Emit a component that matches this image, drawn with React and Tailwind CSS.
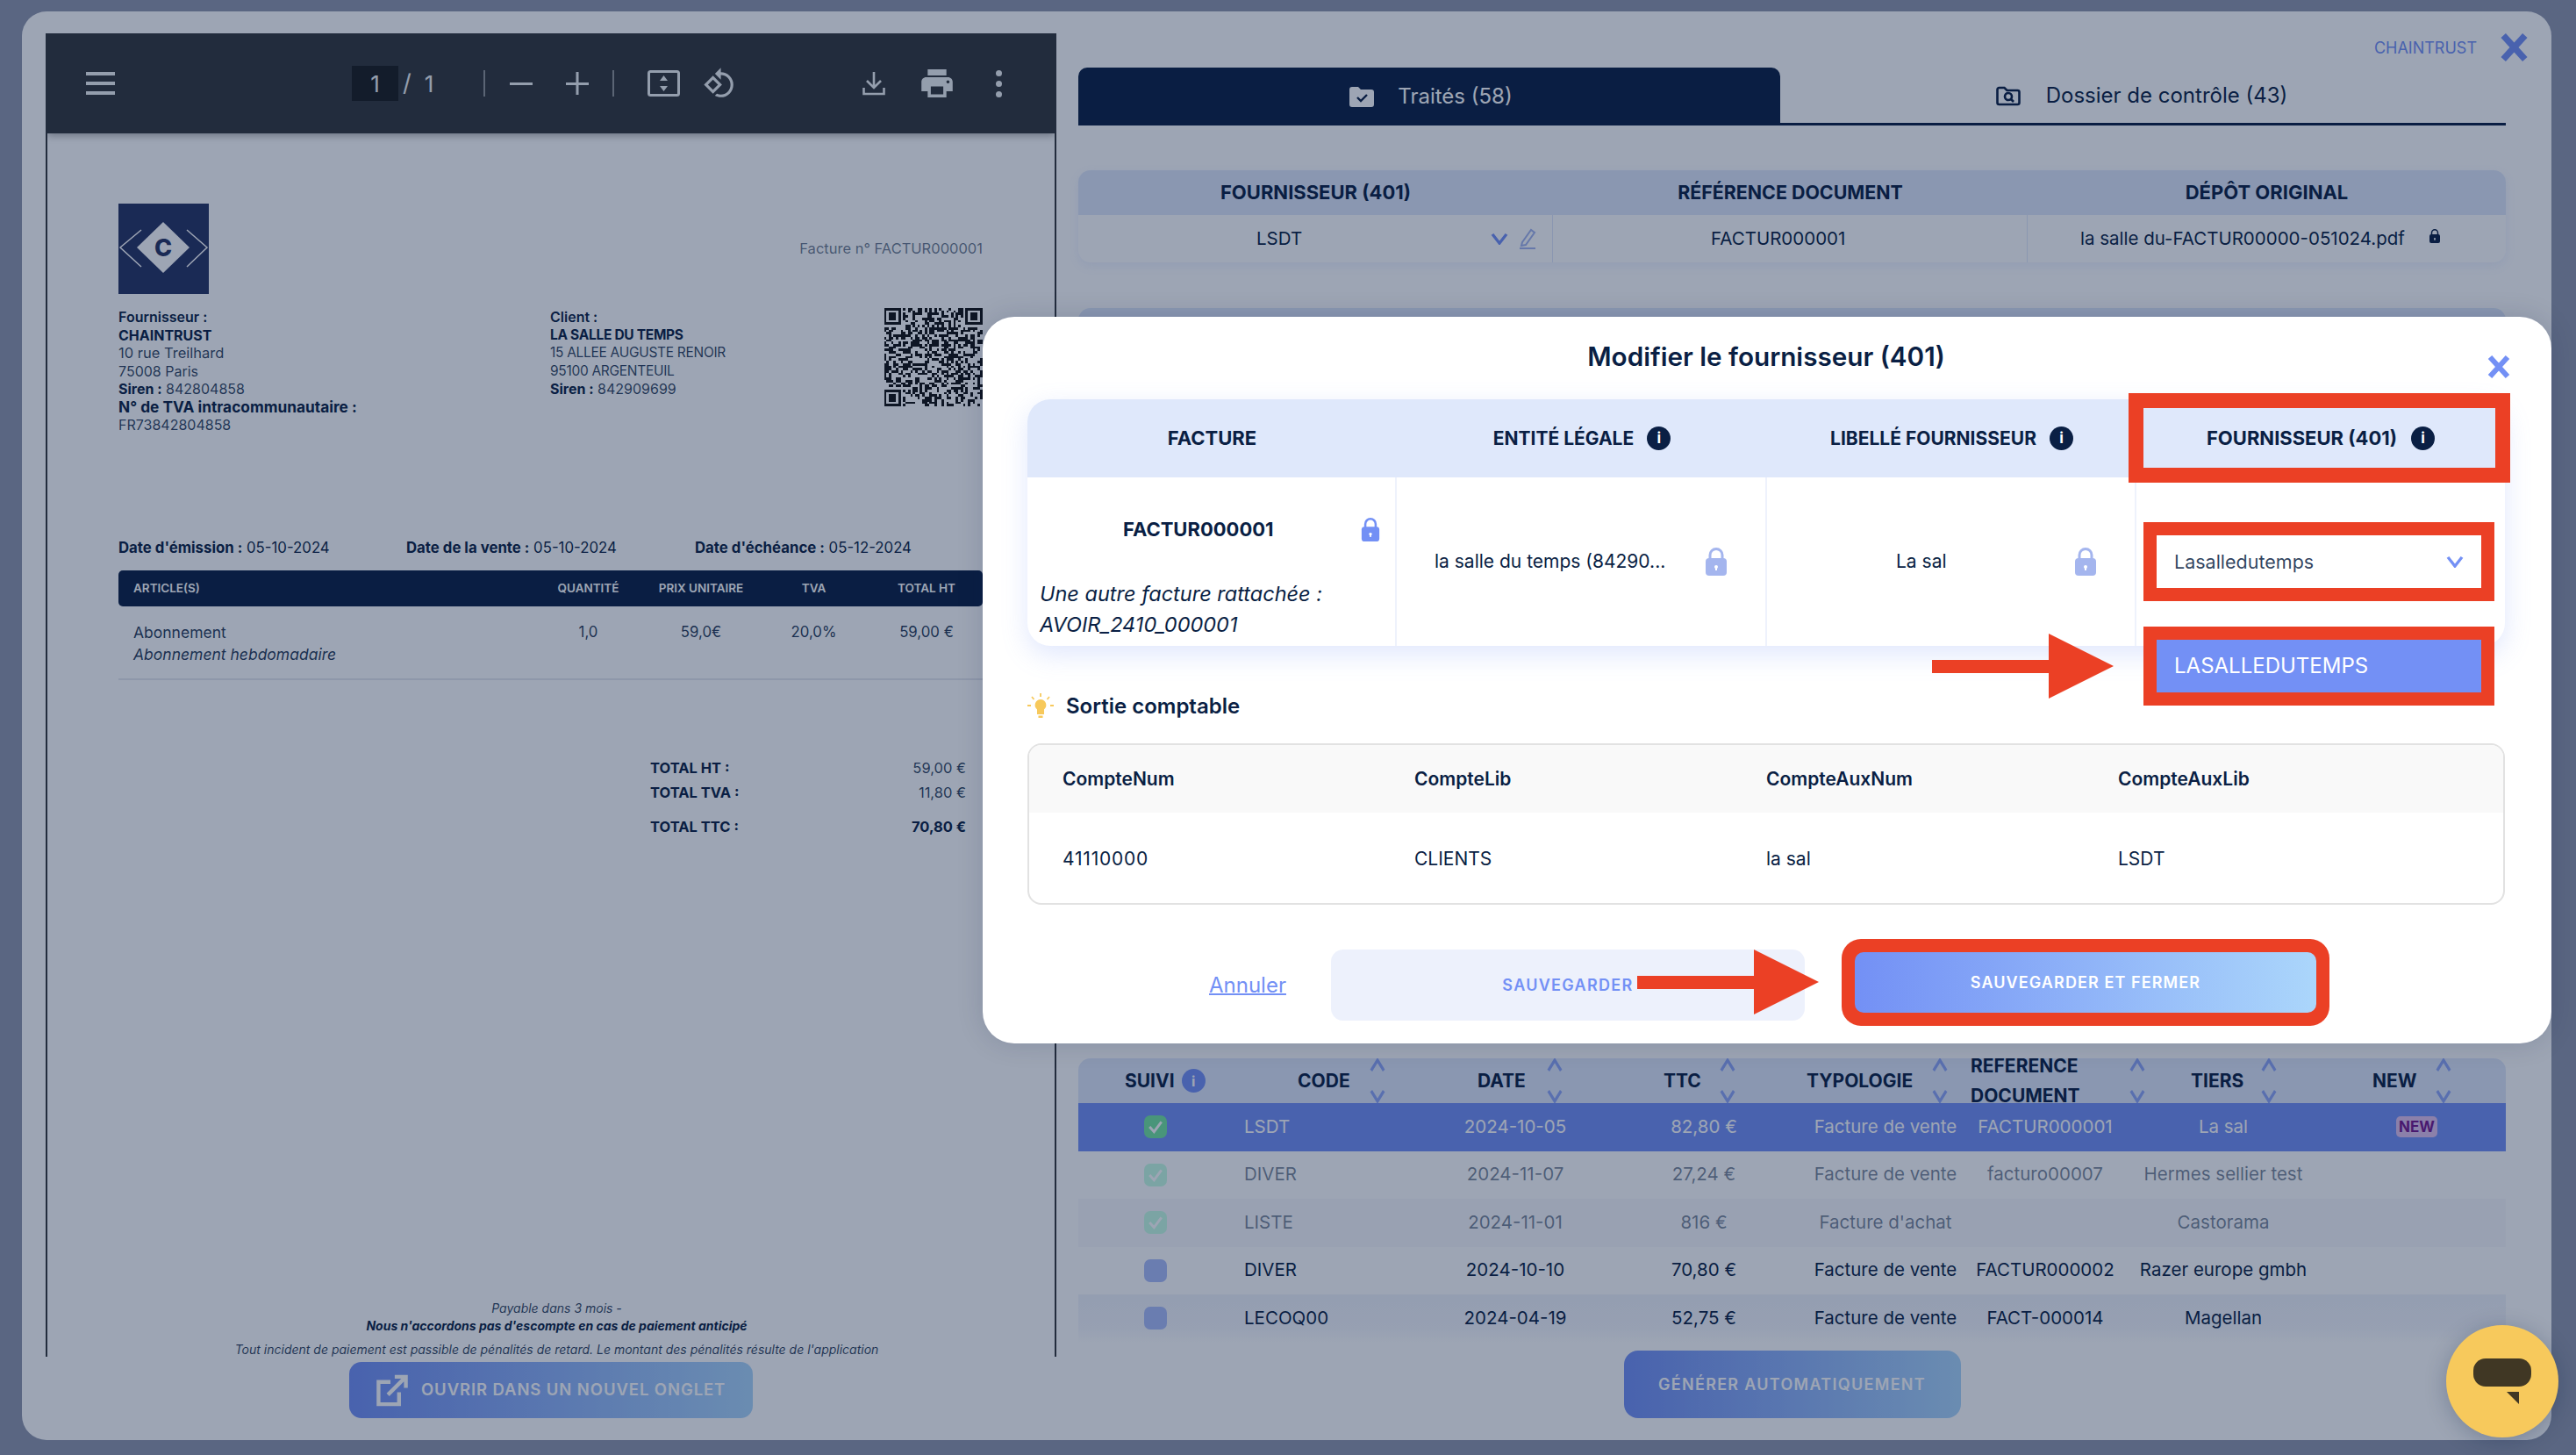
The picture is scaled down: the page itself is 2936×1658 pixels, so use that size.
import React from "react";

const font = { fontFamily: '"Inter","Liberation Sans",sans-serif' };

function Chevron({ up, className = "" }) {
  return (
    <svg viewBox="0 0 20 14" className={className} preserveAspectRatio="none" fill="none" stroke="currentColor" strokeWidth="3.4">
      <path d={up ? "M2 13 L10 2 L18 13" : "M2 1 L10 12 L18 1"} />
    </svg>
  );
}

function Lock({ className = "" }) {
  return (
    <svg viewBox="0 0 24 32" className={className} fill="currentColor">
      <path d="M5 14 V8.5 a7 7 0 0 1 14 0 V14" fill="none" stroke="currentColor" strokeWidth="3" />
      <rect x="0" y="12" width="24" height="20" rx="4" />
      <circle cx="12" cy="22" r="2" fill="#fff" />
      <rect x="11" y="22" width="2" height="4" fill="#fff" />
    </svg>
  );
}

function Info({ className = "" }) {
  return (
    <span className={`flex shrink-0 items-center justify-center rounded-full bg-[#0a1f44] text-[17px] font-bold leading-none text-white ${className}`}>
      i
    </span>
  );
}

function X({ className = "" }) {
  return (
    <svg viewBox="0 0 26 26" className={className} fill="none" stroke="currentColor" strokeWidth="6">
      <path d="M3 2 L23 24 M23 2 L3 24" />
    </svg>
  );
}

function Qr() {
  const n = 41;
  const cells = [];
  let s = 12345;
  const finder = (x, y) => x >= 0 && y >= 0 && x < 7 && y < 7;
  for (let y = 0; y < n; y++) {
    for (let x = 0; x < n; x++) {
      s = (s * 1103515245 + 12345) & 0x7fffffff;
      const inF = (x < 8 && y < 8) || (x >= n - 8 && y < 8) || (x < 8 && y >= n - 8);
      if (inF) {
        const f = x < 8 && y < 8 ? [x, y] : x >= n - 8 && y < 8 ? [x - (n - 7), y] : [x, y - (n - 7)];
        if (finder(f[0], f[1])) {
          const [a, b] = f;
          const ring = a === 0 || a === 6 || b === 0 || b === 6;
          const core = a >= 2 && a <= 4 && b >= 2 && b <= 4;
          if (ring || core) cells.push([x, y]);
        }
      } else if ((s >> 16) & 1) cells.push([x, y]);
    }
  }
  return (
    <svg viewBox="0 0 41 41" className="h-[112px] w-[113px]" shapeRendering="crispEdges">
      {cells.map(([x, y]) => (
        <rect key={`${x}-${y}`} x={x} y={y} width="1" height="1" fill="#111" />
      ))}
    </svg>
  );
}

function Logo() {
  return (
    <svg viewBox="0 0 103 103" className="h-[103px] w-[103px] shrink-0">
      <rect width="103" height="103" fill="#263262" />
      <path d="M51 21 L81 50 L51 79 L21 50 Z" fill="#fff" />
      <path d="M26 30 L2 50 L26 72 M78 30 L101 50 L78 72" fill="none" stroke="#fff" strokeWidth="1.5" />
      <text x="51" y="60" textAnchor="middle" fontSize="27" fontWeight="800" fill="#263262" fontFamily="Inter,sans-serif">C</text>
    </svg>
  );
}

function Toolbar() {
  return (
    <div className="relative z-10 flex h-[114px] shrink-0 items-center bg-[#323639] text-[#f1f3f4] shadow-[0_3px_8px_rgba(0,0,0,0.3)]">
      <div className="ml-[44px] flex w-[33px] flex-col gap-[7px]">
        <span className="h-[4px] bg-[#f1f3f4]" />
        <span className="h-[4px] bg-[#f1f3f4]" />
        <span className="h-[4px] bg-[#f1f3f4]" />
      </div>
      <div className="ml-[270px] flex h-[40px] w-[53px] items-center justify-center bg-[#191b1c] text-[26px]">1</div>
      <span className="ml-[5px] text-[27px]">/</span>
      <span className="ml-[15px] text-[26px]">1</span>
      <span className="ml-[57px] h-[30px] w-[2px] bg-[#f1f3f4]/50" />
      <svg viewBox="0 0 26 26" className="ml-[28px] h-[26px] w-[26px]" fill="currentColor"><rect y="12" width="26" height="3" /></svg>
      <svg viewBox="0 0 26 26" className="ml-[38px] h-[26px] w-[26px]" fill="currentColor"><rect y="12" width="26" height="3" /><rect x="11.5" width="3" height="26" /></svg>
      <span className="ml-[27px] h-[30px] w-[2px] bg-[#f1f3f4]/50" />
      <svg viewBox="0 0 37 30" className="ml-[38px] h-[30px] w-[37px]" fill="none" stroke="currentColor" strokeWidth="3">
        <rect x="1.5" y="1.5" width="34" height="27" rx="2" />
        <path d="M18.5 6 L23 12 H14 Z M18.5 24 L14 18 H23 Z" fill="currentColor" stroke="none" />
      </svg>
      <svg viewBox="0 0 24 24" className="ml-[26px] h-[38px] w-[38px]" fill="currentColor">
        <path d="M7.34 6.41L.86 12.9l6.49 6.48 6.49-6.48-6.5-6.49zM3.69 12.9l3.66-3.66L11 12.9l-3.66 3.66-3.65-3.66zm15.67-6.26C17.61 4.88 15.3 4 13 4V.76L8.76 5 13 9.24V6c1.79 0 3.58.68 4.95 2.05 2.73 2.73 2.73 7.17 0 9.9C16.58 19.32 14.79 20 13 20c-.97 0-1.94-.21-2.84-.61l-1.49 1.49C10.02 21.62 11.51 22 13 22c2.3 0 4.61-.88 6.36-2.64 3.52-3.51 3.52-9.21 0-12.72z" />
      </svg>
      <svg viewBox="0 0 26 28" className="ml-[144px] h-[28px] w-[26px]" fill="none" stroke="currentColor" strokeWidth="2.6">
        <path d="M13 1 V18 M5 11 L13 19 L21 11 M1.5 19 V26 H24.5 V19" />
      </svg>
      <svg viewBox="2 3 20 18" className="ml-[41px] h-[32px] w-[36px]" fill="currentColor">
        <path d="M19 8H5c-1.66 0-3 1.34-3 3v6h4v4h12v-4h4v-6c0-1.66-1.34-3-3-3zm-3 11H8v-5h8v5zm3-7c-.55 0-1-.45-1-1s.45-1 1-1 1 .45 1 1-.45 1-1 1zm-1-9H6v4h12V3z" />
      </svg>
      <div className="ml-[49px] flex flex-col gap-[5px]">
        <span className="h-[7px] w-[7px] rounded-full bg-[#f1f3f4]" />
        <span className="h-[7px] w-[7px] rounded-full bg-[#f1f3f4]" />
        <span className="h-[7px] w-[7px] rounded-full bg-[#f1f3f4]" />
      </div>
    </div>
  );
}

function Invoice() {
  const line = "h-[20.5px] leading-[20.5px]";
  const caps = "h-[20.5px] text-[15.5px] leading-[20.5px] tracking-[-0.3px]";
  return (
    <div className="flex-1 bg-white pl-[81px] pr-[82px] text-[16.8px] text-[#0a1f44]">
      <div className="mt-[80px] flex items-center justify-between">
        <Logo />
        <span className="text-[16.5px] text-[#0a1f44]/60">Facture n° FACTUR000001</span>
      </div>
      <div className="mt-[16px] grid h-[144px] grid-cols-[492px_380px_113px] text-[16px]">
        <div>
          <div className={`${line} font-semibold`}>Fournisseur :</div>
          <div className={`${line} font-bold`}>CHAINTRUST</div>
          <div className={`${line} text-[16.5px] text-[#0a1f44]/85`}>10 rue Treilhard</div>
          <div className={`${line} text-[#0a1f44]/85`}>75008 Paris</div>
          <div className={`${line} text-[#0a1f44]/85`}><b className="font-bold text-[#0a1f44]">Siren :</b> 842804858</div>
          <div className={`${line} text-[17.3px] font-bold`}>N° de TVA intracommunautaire :</div>
          <div className={`${line} text-[#0a1f44]/85`}>FR73842804858</div>
        </div>
        <div>
          <div className={`${line} font-semibold`}>Client :</div>
          <div className={`${caps} font-bold`}>LA SALLE DU TEMPS</div>
          <div className={`${caps} text-[#0a1f44]/85`}>15 ALLEE AUGUSTE RENOIR</div>
          <div className={`${caps} text-[#0a1f44]/85`}>95100 ARGENTEUIL</div>
          <div className={`${line} text-[#0a1f44]/85`}><b className="font-bold text-[#0a1f44]">Siren :</b> 842909699</div>
        </div>
        <Qr />
      </div>
      <div className="mt-[119px] grid h-[20px] grid-cols-[328px_329px_1fr] items-center leading-[20px]">
        <span><b className="font-bold">Date d'émission :</b> 05-10-2024</span>
        <span><b className="font-bold">Date de la vente :</b> 05-10-2024</span>
        <span><b className="font-bold">Date d'échéance :</b> 05-12-2024</span>
      </div>
      <div className="mt-[16px] grid h-[41px] grid-cols-[471px_129px_128px_129px_128px] items-center rounded-[5px] bg-[#0a1f44] text-center text-[13.5px] font-semibold text-white">
        <span className="pl-[17px] text-left">ARTICLE(S)</span>
        <span>QUANTITÉ</span>
        <span>PRIX UNITAIRE</span>
        <span>TVA</span>
        <span>TOTAL HT</span>
      </div>
      <div className="grid h-[84px] grid-cols-[471px_129px_128px_129px_128px] border-b-2 border-[#e6e8ee] pt-[17px] text-center leading-[25px] text-[#0a1f44]/90">
        <div className="pl-[17px] text-left text-[17.5px]">
          <div>Abonnement</div>
          <div className="italic">Abonnement hebdomadaire</div>
        </div>
        <span>1,0</span>
        <span>59,0€</span>
        <span>20,0%</span>
        <span>59,00 €</span>
      </div>
      <div className="mt-[90px] pl-[606px] pr-[19px] text-[16.5px] leading-[20px]">
        <div className="flex justify-between"><b className="font-bold">TOTAL HT :</b><span className="text-[#0a1f44]/85">59,00 €</span></div>
        <div className="mt-[8px] flex justify-between"><b className="font-bold">TOTAL TVA :</b><span className="text-[#0a1f44]/85">11,80 €</span></div>
        <div className="mt-[19px] flex justify-between"><b className="font-bold">TOTAL TTC :</b><b className="font-bold">70,80 €</b></div>
      </div>
      <div className="mt-[529px] pl-[14px] text-center text-[14px] italic leading-[20px]">
        <div className="text-[#0a1f44]/85">Payable dans 3 mois -</div>
        <div className="font-bold">Nous n'accordons pas d'escompte en cas de paiement anticipé</div>
        <div className="mt-[7px] whitespace-nowrap text-[#0a1f44]/85">Tout incident de paiement est passible de pénalités de retard. Le montant des pénalités résulte de l'application</div>
      </div>
    </div>
  );
}

const gradient = "bg-[linear-gradient(90deg,#7390f5,#abd6fb)]";

function LeftColumn() {
  return (
    <div className="flex w-[1179px] shrink-0 flex-col items-center pl-[27px] pt-[25px]">
      <div className="flex h-[1508px] w-[1152px] flex-col overflow-hidden border-x-2 border-[#323639]">
        <Toolbar />
        <Invoice />
      </div>
      <div className={`mt-[6px] flex h-[64px] w-[460px] items-center gap-[14px] rounded-[14px] pl-[30px] ${gradient} text-[18.5px] font-semibold tracking-[0.9px] text-white`}>
        <svg viewBox="0 0 38 38" className="h-[37px] w-[38px] shrink-0" fill="none" stroke="currentColor" strokeWidth="4.5">
          <path d="M17 9 H3 V35 H27 V21 M14 24 L34 4 M22 3 H35 V16" />
        </svg>
        <span className="whitespace-nowrap">OUVRIR DANS UN NOUVEL ONGLET</span>
      </div>
    </div>
  );
}

function Tabs() {
  return (
    <div className="mt-[7px] flex h-[66px]">
      <div className="flex w-[800px] items-center justify-center gap-[27px] rounded-t-[10px] bg-[#0a1f44] pl-[4px] text-[24px] text-white">
        <svg viewBox="0 0 28 24" className="h-[24px] w-[28px]">
          <path d="M0 4 a3 3 0 0 1 3-3 h7 l3 3 h12 a3 3 0 0 1 3 3 v14 a3 3 0 0 1-3 3 H3 a3 3 0 0 1-3-3 Z" fill="#fff" />
          <path d="M9 13 l4 4 l7-7" fill="none" stroke="#0a1f44" strokeWidth="2.4" />
        </svg>
        <span>Traités (58)</span>
      </div>
      <div className="flex flex-1 items-center justify-center gap-[29px] border-b-[3px] border-[#0a1f44] bg-white pr-[3px] text-[24px] text-[#0a1f44]">
        <svg viewBox="0 0 28 24" className="h-[24px] w-[28px]" fill="none" stroke="#0a1f44" strokeWidth="2.6">
          <path d="M1.5 5 a2 2 0 0 1 2-2 h6 l3 3 h12 a2 2 0 0 1 2 2 v12 a2 2 0 0 1-2 2 H3.5 a2 2 0 0 1-2-2 Z" />
          <circle cx="14" cy="13" r="4" />
          <path d="M17 16 l3 3" />
        </svg>
        <span>Dossier de contrôle (43)</span>
      </div>
    </div>
  );
}

function SummaryTable() {
  const cell = "flex items-center text-[20.5px] text-[#0a1f44]";
  return (
    <div className="mt-[51px] h-[105px] overflow-hidden rounded-[14px] bg-white shadow-[0_4px_12px_rgba(115,144,245,0.12)]">
      <div className="grid h-[51px] grid-cols-[541px_541px_1fr] items-center bg-[#dfe8fb] text-center text-[22px] font-bold text-[#0a1f44]">
        <span>FOURNISSEUR (401)</span>
        <span className="text-[21.4px]">RÉFÉRENCE DOCUMENT</span>
        <span>DÉPÔT ORIGINAL</span>
      </div>
      <div className="grid h-[54px] grid-cols-[541px_541px_1fr]">
        <div className={`${cell} border-r border-[#dfe8fb]`}>
          <span className="ml-[203px] w-[52px] text-center">LSDT</span>
          <Chevron className="ml-[215px] h-[13px] w-[20px] text-[#7390f5]" />
          <svg viewBox="0 0 20 24" className="ml-[12px] h-[24px] w-[20px]" fill="none" stroke="#a4b5ee" strokeWidth="2">
            <path d="M4 16 L14 2 L18 5 L8 19 L3 20 Z M1 23 H19" />
          </svg>
        </div>
        <div className={`${cell} border-r border-[#dfe8fb]`}>
          <span className="ml-[180px]">FACTUR000001</span>
        </div>
        <div className={cell}>
          <span className="ml-[60px] whitespace-nowrap">la salle du-FACTUR00000-051024.pdf</span>
          <Lock className="ml-[28px] h-[16px] w-[12px] -translate-y-[3px] text-[#0a1f44]" />
        </div>
      </div>
    </div>
  );
}

const headers = [
  { label: "SUIVI", cls: "pl-[53px]", info: true },
  { label: "CODE", cls: "pl-[74px]", gap: "ml-[22px]" },
  { label: "DATE", cls: "pl-[64px]", gap: "ml-[24px]" },
  { label: "TTC", cls: "pl-[62px]", gap: "ml-[21px]" },
  { label: "TYPOLOGIE", cls: "pl-[9px]", gap: "ml-[22px]" },
  { label: "REFERENCE DOCUMENT", cls: "-ml-[2px]", gap: "ml-[57px]", two: true },
  { label: "TIERS", cls: "pl-[83px]", gap: "ml-[20px]" },
  { label: "NEW", cls: "pl-[50px]", gap: "ml-[21px]" },
];

const cols = "grid grid-cols-[176px_215px_214px_216px_198px_166px_240px_201px]";

const rows = [
  { code: "LSDT", date: "2024-10-05", ttc: "82,80 €", type: "Facture de vente", ref: "FACTUR000001", tiers: "La sal", isNew: true, bg: "bg-[#7390f5]", text: "text-white", check: "bg-[#73e49e]", done: true },
  { code: "DIVER", date: "2024-11-07", ttc: "27,24 €", type: "Facture de vente", ref: "facturo00007", tiers: "Hermes sellier test", bg: "bg-white", text: "text-[#0a1f44]/55", check: "bg-[#c6fde4]", done: true },
  { code: "LISTE", date: "2024-11-01", ttc: "816 €", type: "Facture d'achat", ref: "", tiers: "Castorama", bg: "bg-[#f8f9fc]", text: "text-[#0a1f44]/55", check: "bg-[#c6fde4]", done: true },
  { code: "DIVER", date: "2024-10-10", ttc: "70,80 €", type: "Facture de vente", ref: "FACTUR000002", tiers: "Razer europe gmbh", bg: "bg-white", text: "text-[#0a1f44]", check: "bg-[#abbcf8]" },
  { code: "LECOQ00", date: "2024-04-19", ttc: "52,75 €", type: "Facture de vente", ref: "FACT-000014", tiers: "Magellan", bg: "bg-[linear-gradient(180deg,#f0f3fb,#f5f7fc_70%,#ffffff)]", text: "text-[#0a1f44]", check: "bg-[#abbcf8]" },
];

function ListTable() {
  return (
    <div className="mt-[20px] h-[324px]">
      <div className={`${cols} h-[51px] grid-rows-[51px] rounded-t-[14px] bg-[#dfe8fb] text-[21px] font-bold text-[#0a1f44]`}>
        {headers.map((h) => (
          <div key={h.label} className={`flex h-[51px] items-center ${h.cls}`}>
            {h.two ? (
              <span className="flex w-[124px] flex-col gap-[17px] text-left leading-[17px]">
                <span>REFERENCE</span>
                <span>DOCUMENT</span>
              </span>
            ) : (
              <span>{h.label}</span>
            )}
            {h.info ? (
              <span className="ml-[8px] flex h-[27px] w-[27px] items-center justify-center rounded-full bg-[#7390f5] text-[16px] text-white">i</span>
            ) : (
              <div className={`flex h-full shrink-0 flex-col justify-between text-[#8ea6f7] ${h.gap}`}>
                <Chevron up className="h-[15px] w-[18px]" />
                <Chevron className="h-[15px] w-[18px]" />
              </div>
            )}
          </div>
        ))}
      </div>
      {rows.map((r) => (
        <div key={r.code + r.date} className={`${cols} h-[54.5px] items-center text-center text-[20.5px] ${r.bg} ${r.text}`}>
          <div className="flex justify-center">
            <span className={`flex h-[26px] w-[26px] items-center justify-center rounded-[7px] ${r.check}`}>
              {r.done && (
                <svg viewBox="0 0 16 16" className="h-[18px] w-[18px]" fill="none" stroke="#fff" strokeWidth="2.6">
                  <path d="M2 8 L6.5 13 L14 3" />
                </svg>
              )}
            </span>
          </div>
          <span className="pl-[13px] text-left">{r.code}</span>
          <span>{r.date}</span>
          <span>{r.ttc}</span>
          <span className="whitespace-nowrap">{r.type}</span>
          <span className="whitespace-nowrap">{r.ref}</span>
          <span className="whitespace-nowrap">{r.tiers}</span>
          <div className="flex justify-center">
            {r.isNew && (
              <span className="rounded-[5px] bg-[#e1c1ee] px-[3px] py-[1px] text-[17px] font-bold leading-[22px] text-[#74178d]">NEW</span>
            )}
          </div>
        </div>
      ))}
    </div>
  );
}

function RightColumn() {
  return (
    <div className="flex min-w-0 flex-1 flex-col pl-[25px] pr-[52px]">
      <div className="mt-[25px] -mr-[26px] flex h-[32px] items-center justify-end gap-[26px]">
        <span className="text-[18px] text-[#7390f5]">CHAINTRUST</span>
        <X className="h-[32px] w-[33px] text-[#7390f5]" />
      </div>
      <Tabs />
      <SummaryTable />
      <div className="mt-[52px] h-[835px] rounded-t-[14px] bg-[#dfe8fb]" />
      <ListTable />
      <div className={`mx-auto mt-[9px] flex h-[77px] w-[384px] items-center justify-center rounded-[16px] ${gradient} text-[18px] font-semibold tracking-[1.3px] text-white`}>
        GÉNÉRER AUTOMATIQUEMENT
      </div>
    </div>
  );
}

function Modal() {
  const cell = "flex items-center border-r-2 border-[#eef2fc]";
  const head = "flex items-center justify-center font-bold text-[#0a1f44]";
  return (
    <div className="absolute left-[1120px] top-[361px] z-20 h-[828px] w-[1788px] rounded-[36px] bg-white pl-[51px] pr-[53px] text-[#0a1f44] shadow-[0_0_30px_rgba(10,30,68,0.15)]">
      <div className="flex h-[94px] items-center justify-center pb-[4px] text-[29.7px] font-semibold">
        Modifier le fournisseur (401)
      </div>
      <X className="absolute right-[47px] top-[44px] h-[26px] w-[26px] text-[#7390f5]" />
      <div className="rounded-[26px] bg-white shadow-[0_10px_30px_rgba(115,144,245,0.22)]">
        <div className="grid h-[89px] grid-cols-[421px_422px_421px_420px] rounded-t-[26px] bg-[#dfe8fb]">
          <div className={`${head} text-[22px]`}>FACTURE</div>
          <div className={`${head} gap-[15px] text-[21px]`}>ENTITÉ LÉGALE<Info className="h-[27px] w-[27px]" /></div>
          <div className={`${head} gap-[15px] text-[21px]`}>LIBELLÉ FOURNISSEUR<Info className="h-[27px] w-[27px]" /></div>
          <div className={`${head} gap-[16px] text-[22px]`}>FOURNISSEUR (401)<Info className="h-[27px] w-[27px]" /></div>
        </div>
        <div className="grid h-[192px] grid-cols-[421px_422px_421px_420px] text-[21px]">
          <div className="flex flex-col border-r-2 border-[#eef2fc] pl-[14px]">
            <div className="mt-[45px] flex h-[28px] items-center">
              <span className="ml-[95px] w-[170px] text-[22px] font-bold">FACTUR000001</span>
              <Lock className="ml-[101px] h-[27px] w-[22px] text-[#7390f5]" />
            </div>
            <div className="mt-[42px] text-[23.5px] italic leading-[35px]">
              <div className="whitespace-nowrap">Une autre facture rattachée :</div>
              <div>AVOIR_2410_000001</div>
            </div>
          </div>
          <div className={cell}>
            <span className="ml-[43px] w-[260px] whitespace-nowrap">la salle du temps (84290...</span>
            <Lock className="ml-[48px] h-[32px] w-[26px] text-[#a4b5ee]" />
          </div>
          <div className={cell}>
            <span className="ml-[147px] w-[56px] whitespace-nowrap">La sal</span>
            <Lock className="ml-[147px] h-[32px] w-[26px] text-[#a4b5ee]" />
          </div>
          <div className="flex items-center pl-[8px]">
            <div className="flex h-[90px] w-[400px] items-center justify-between border-[15px] border-[#eb4025] bg-white pl-[20px] pr-[20px] text-[21.5px] text-[#0a1f44]/85">
              Lasalledutemps
              <Chevron className="h-[13px] w-[20px] text-[#7390f5]" />
            </div>
          </div>
        </div>
      </div>
      <div className="mt-[54px] flex h-[30px] items-center gap-[14px]">
        <svg viewBox="0 0 30 30" className="h-[30px] w-[30px]" fill="#f7c95c">
          <path d="M15 7 a6.5 6.5 0 0 1 4 11.5 V24 H11 V18.5 A6.5 6.5 0 0 1 15 7 Z" />
          <rect x="12.5" y="25.5" width="5" height="2.5" />
          <path d="M15 0 V4 M5 4 L7.5 7 M25 4 L22.5 7 M0 14 H4 M26 14 H30" stroke="#f7c95c" strokeWidth="1.8" />
        </svg>
        <span className="text-[24px] font-semibold">Sortie comptable</span>
      </div>
      <div className="mt-[27px] h-[184px] overflow-hidden rounded-[16px] border-2 border-[#e2e2e2] text-[21px]">
        <div className="grid h-[77px] grid-cols-[401px_401px_401px_1fr] items-center bg-[#f9f9f9] pl-[38px] font-semibold">
          <span>CompteNum</span><span>CompteLib</span><span>CompteAuxNum</span><span>CompteAuxLib</span>
        </div>
        <div className="grid h-[105px] grid-cols-[401px_401px_401px_1fr] items-center pl-[38px]">
          <span className="tracking-[0.8px]">41110000</span><span>CLIENTS</span><span>la sal</span><span>LSDT</span>
        </div>
      </div>
      <div className="mt-[39px] flex h-[99px] items-start">
        <span className="ml-[207px] mt-[35px] text-[24px] leading-[36px] text-[#7390f5] underline decoration-2">Annuler</span>
        <div className="ml-[51px] mt-[12px] flex h-[81px] w-[540px] items-center justify-center rounded-[14px] bg-[#edf1fc] text-[18px] font-semibold tracking-[1.3px] text-[#7390f5]">
          SAUVEGARDER
        </div>
        <div className="ml-[42px] flex h-[99px] w-[556px] rounded-[22px] bg-[#eb4025] px-[15px] py-[15px]">
          <div className={`flex flex-1 items-center justify-center rounded-[10px] ${gradient} text-[18px] font-semibold tracking-[1.1px] text-white`}>
            SAUVEGARDER ET FERMER
          </div>
        </div>
      </div>
      {/* annotations over the dialog */}
      <div className="absolute left-[1306px] top-[87px] h-[102px] w-[435px] border-[17px] border-[#eb4025]" />
      <div className="absolute left-[1323px] top-[353px] flex h-[90px] w-[400px] items-center border-[15px] border-[#eb4025] bg-[#7390f5] pl-[20px] text-[24px] text-white">
        LASALLEDUTEMPS
      </div>
      <svg viewBox="0 0 207 74" className="absolute left-[1082px] top-[361px] h-[74px] w-[207px]" fill="#eb4025">
        <path d="M0 30 H133 V0 L207 37 L133 74 V45 H0 Z" />
      </svg>
      <svg viewBox="0 0 207 74" className="absolute left-[746px] top-[721px] h-[74px] w-[207px]" fill="#eb4025">
        <path d="M0 30 H133 V0 L207 37 L133 74 V45 H0 Z" />
      </svg>
    </div>
  );
}

export default function App() {
  return (
    <div className="relative h-[1658px] w-full overflow-hidden bg-[#8f96ac] pl-[25px] pr-[28px] pt-[13px]" style={font}>
      <div className="flex h-[1628px] rounded-[28px] bg-white">
        <LeftColumn />
        <RightColumn />
      </div>
      <div className="absolute inset-0 z-10 bg-[#0a1e44]/40" />
      <Modal />
      <div className="absolute left-[2788px] top-[1510px] z-30 flex h-[128px] w-[128px] items-center justify-center rounded-full bg-[#f7c95c] shadow-[0_4px_24px_rgba(10,30,68,0.25)]">
        <svg viewBox="0 0 66 52" className="h-[52px] w-[66px]" fill="#403724">
          <rect width="66" height="32" rx="14" />
          <path d="M38 38 H52 V52 Z" />
        </svg>
      </div>
    </div>
  );
}
